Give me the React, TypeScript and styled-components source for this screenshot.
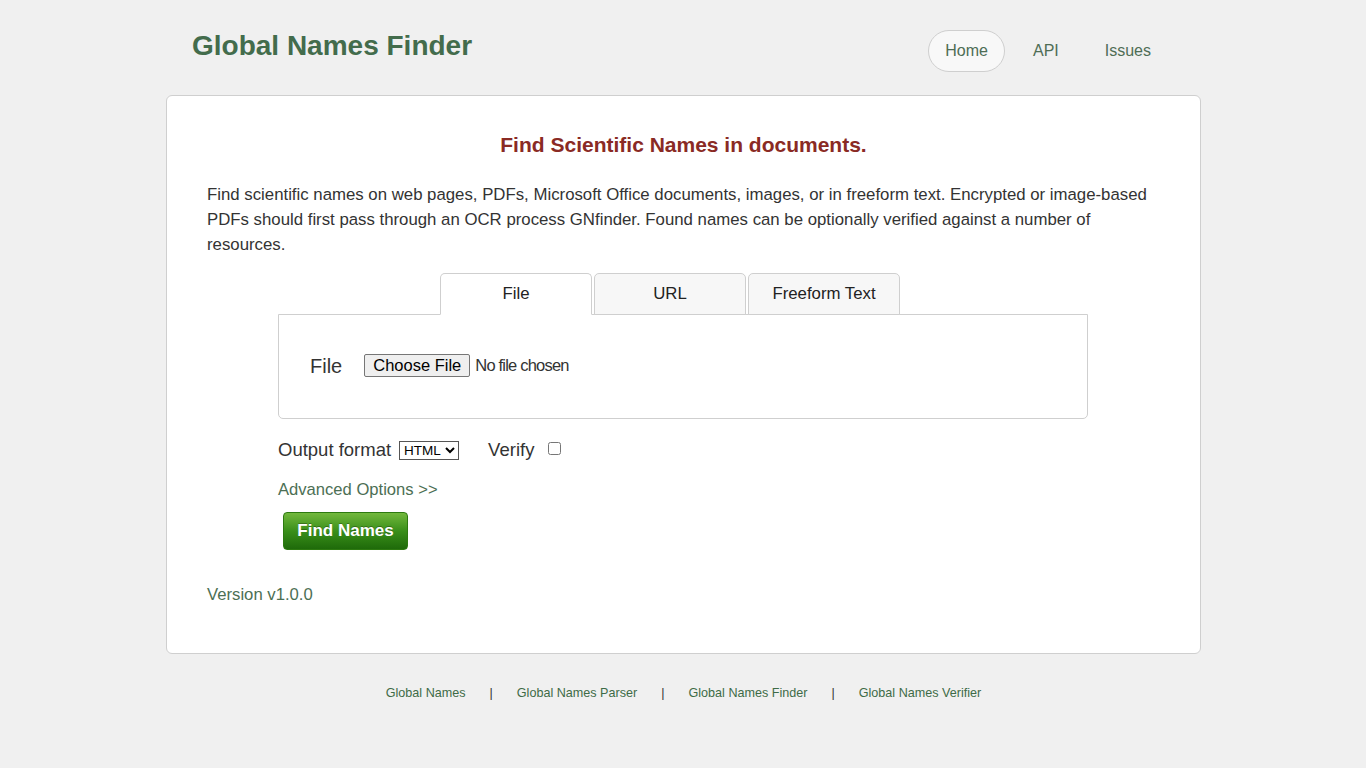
import React from "react";
import styled, { createGlobalStyle } from "styled-components";

const Global = createGlobalStyle`
  html, body { margin: 0; padding: 0; }
  body {
    background: #f0f0f0;
    font-family: "Liberation Sans", Arial, sans-serif;
    color: #333;
  }
`;

const Page = styled.div`
  width: 1035px;
  margin: 0 auto;
  padding-left: 1px;
`;

const Header = styled.header`
  display: flex;
  justify-content: space-between;
  align-items: flex-start;
  height: 95px;
`;

const Brand = styled.h1`
  margin: 29px 0 0 26px;
  font-size: 28px;
  font-weight: bold;
  color: #436c4c;
  line-height: 33px;
`;

const Nav = styled.nav`
  display: flex;
  margin: 30px 49px 0 0;
`;

const NavItem = styled.a<{ $active?: boolean; $gap?: number }>`
  display: block;
  height: 42px;
  box-sizing: border-box;
  padding: 0 ${(p) => (p.$active ? "16px" : "0")};
  margin-left: ${(p) => p.$gap ?? 0}px;
  line-height: 40px;
  font-size: 16px;
  color: #4e6d55;
  text-decoration: none;
  border: 1px solid ${(p) => (p.$active ? "#cfcfcf" : "transparent")};
  border-radius: 21px;
  background: ${(p) => (p.$active ? "#f8f8f8" : "transparent")};
`;

const Card = styled.main`
  background: #fff;
  border: 1px solid #cfcfcf;
  border-radius: 6px;
  padding: 34px 40px 50px 40px;
  box-sizing: border-box;
  height: 559px;
`;

const Heading = styled.h2`
  text-align: center;
  margin: 0;
  font-size: 21px;
  line-height: 29px;
  font-weight: bold;
  color: #8a2a24;
`;

const Intro = styled.p`
  margin: 23px 0 16px;
  font-size: 16.8px;
  line-height: 25px;
  color: #333;
`;

const Form = styled.div`
  margin: 0 72px 0 71px;
`;

const Tabs = styled.div`
  display: flex;
  gap: 2px;
  margin-left: 162px;
  position: relative;
  z-index: 1;
  margin-bottom: -1px;
`;

const Tab = styled.div<{ $active?: boolean }>`
  width: 152px;
  height: 42px;
  box-sizing: border-box;
  border: 1px solid #cfcfcf;
  border-bottom: ${(p) => (p.$active ? "1px solid #fff" : "1px solid #cfcfcf")};
  border-radius: 5px 5px 0 0;
  background: ${(p) => (p.$active ? "#fff" : "#f7f7f7")};
  text-align: center;
  line-height: 40px;
  font-size: 16.8px;
  color: #222;
`;

const Panel = styled.div`
  border: 1px solid #cfcfcf;
  border-radius: 0 0 5px 5px;
  height: 105px;
  box-sizing: border-box;
  display: flex;
  align-items: flex-start;
  padding: 38px 0 0 31px;
`;

const FieldLabel = styled.span`
  font-size: 20px;
  color: #333;
  margin-right: 22px;
  line-height: 26px;
`;

const FileInput = styled.input`
  font-family: "Liberation Sans", Arial, sans-serif;
  font-size: 16.5px;
  margin-top: 1px;
  letter-spacing: -0.8px;
  &::file-selector-button {
    font-family: "Liberation Sans", Arial, sans-serif;
    font-size: 16.5px;
    letter-spacing: 0;
    padding: 1px 8px;
    margin-right: 5px;
    border: 1px solid #767676;
    border-radius: 2px;
    background: #efefef;
    color: #000;
  }
`;

const OptionsRow = styled.div`
  display: flex;
  align-items: center;
  margin-top: 20px;
  font-size: 18.5px;
  color: #333;
`;

const Select = styled.select`
  margin-left: 8px;
  font-size: 13.5px;
  font-family: "Liberation Sans", Arial, sans-serif;
  height: 19px;
  width: 60px;
  padding: 0;
  border: 1px solid #555;
  border-radius: 0;
  background: #fff;
  color: #000;
`;

const VerifyLabel = styled.span`
  margin-left: 29px;
`;

const Check = styled.input`
  margin: 0 0 4px 14px;
  width: 13px;
  height: 13px;
`;

const Advanced = styled.a`
  display: block;
  margin-top: 19px;
  font-size: 16.6px;
  color: #4c6f54;
  text-decoration: none;
`;

const FindButton = styled.button`
  margin: 12px 0 0 5px;
  width: 125px;
  height: 38px;
  border: 1px solid #2d7a10;
  border-radius: 4px;
  background: linear-gradient(#72b83c, #3a8f1a 50%, #1f6a0a);
  color: #fff;
  font-family: "Liberation Sans", Arial, sans-serif;
  font-weight: bold;
  font-size: 17px;
  text-shadow: 0 -1px 0 rgba(0,0,0,0.3);
`;

const Version = styled.div`
  margin-top: 35px;
  font-size: 16.7px;
  color: #4c6f54;
`;

const Footer = styled.footer`
  display: flex;
  justify-content: center;
  gap: 24px;
  margin-top: 32px;
  font-size: 12.6px;
  color: #3e6b47;
`;

const FooterLink = styled.a`
  color: #3e6b47;
  text-decoration: none;
`;

const Sep = styled.span`
  color: #333;
`;

export default function App() {
  return (
    <>
      <Global />
      <Page>
        <Header>
          <Brand>Global Names Finder</Brand>
          <Nav>
            <NavItem $active>Home</NavItem>
            <NavItem $gap={27}>API</NavItem>
            <NavItem $gap={44}>Issues</NavItem>
          </Nav>
        </Header>
        <Card>
          <Heading>Find Scientific Names in documents.</Heading>
          <Intro>
            Find scientific names on web pages, PDFs, Microsoft Office documents, images, or in
            freeform text. Encrypted or image-based PDFs should first pass through an OCR process
            GNfinder. Found names can be optionally verified against a number of resources.
          </Intro>
          <Form>
            <Tabs>
              <Tab $active>File</Tab>
              <Tab>URL</Tab>
              <Tab>Freeform Text</Tab>
            </Tabs>
            <Panel>
              <FieldLabel>File</FieldLabel>
              <FileInput type="file" />
            </Panel>
            <OptionsRow>
              Output format
              <Select defaultValue="HTML">
                <option>HTML</option>
                <option>JSON</option>
                <option>CSV</option>
              </Select>
              <VerifyLabel>Verify</VerifyLabel>
              <Check type="checkbox" />
            </OptionsRow>
            <Advanced>Advanced Options &gt;&gt;</Advanced>
            <FindButton>Find Names</FindButton>
          </Form>
          <Version>Version v1.0.0</Version>
        </Card>
        <Footer>
          <FooterLink>Global Names</FooterLink>
          <Sep>|</Sep>
          <FooterLink>Global Names Parser</FooterLink>
          <Sep>|</Sep>
          <FooterLink>Global Names Finder</FooterLink>
          <Sep>|</Sep>
          <FooterLink>Global Names Verifier</FooterLink>
        </Footer>
      </Page>
    </>
  );
}
